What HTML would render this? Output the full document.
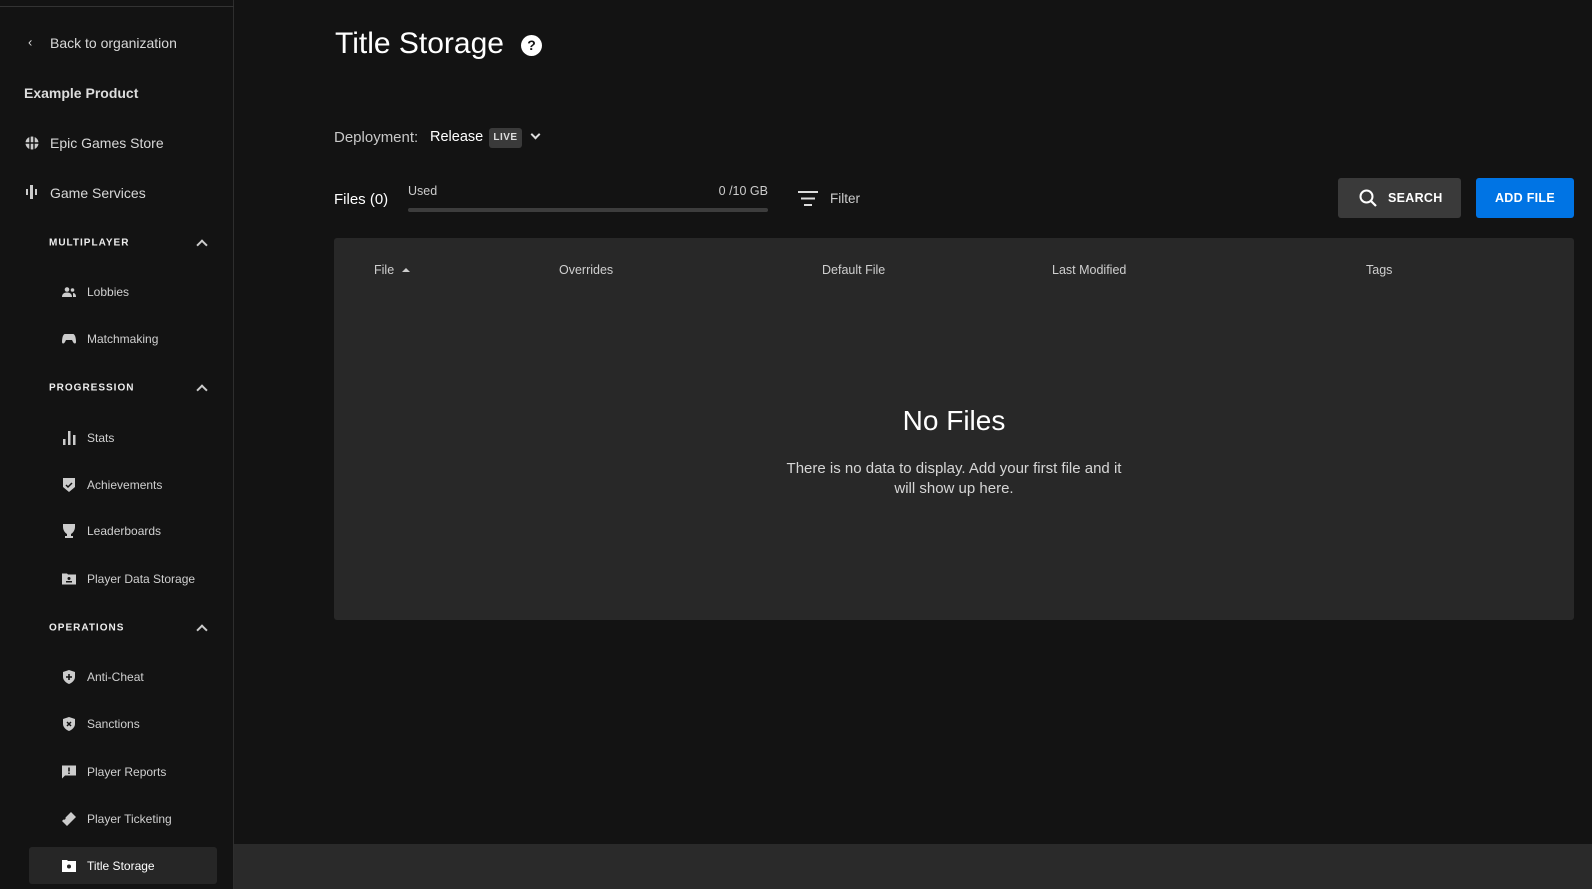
<!DOCTYPE html>
<html><head><meta charset="utf-8"><style>
*{margin:0;padding:0;box-sizing:border-box}
body{width:1592px;height:889px;background:#131313;font-family:"Liberation Sans",sans-serif;color:#ddd;position:relative;overflow:hidden}
.a{position:absolute;white-space:nowrap}
.side{position:absolute;left:0;top:0;width:234px;height:889px;background:#131313;border-right:1px solid #2e2e2e}
.nav{font-size:14px;color:#d8d8d8;transform:translateY(-50%)}
.sub{font-size:12px;color:#d0d0d0;transform:translateY(-50%)}
.sec{font-size:10px;font-weight:bold;letter-spacing:1px;color:#eee;transform:translateY(-50%)}
.ic{position:absolute;transform:translateY(-50%)}
.chev{position:absolute;width:8px;height:8px;border-left:2px solid #ccc;border-top:2px solid #ccc;transform:rotate(45deg)}
.hd{font-size:12.5px;color:#cfcfcf;transform:translateY(-50%)}
</style></head><body>
<div class="side"></div>
<div class="a" style="left:0;top:6px;width:234px;height:1px;background:#333"></div>
<div class="a" style="left:29px;top:847px;width:188px;height:37px;background:#262626;border-radius:3px"></div>

<div class="a nav" style="left:28px;top:42px;font-size:13px">‹</div>
<div class="a nav" style="left:50px;top:43px">Back to organization</div>
<div class="a nav" style="left:24px;top:93px;font-weight:bold;color:#ddd">Example Product</div>
<svg class="ic" style="left:25px;top:143px" width="14" height="14" viewBox="0 0 14 14"><circle cx="7" cy="7" r="6.5" fill="#ccc"/><path d="M0 7h14M5 0v14M9 0v14" stroke="#131313" stroke-width="1.4"/></svg>
<div class="a nav" style="left:50px;top:143px">Epic Games Store</div>
<svg class="ic" style="left:26px;top:192px" width="12" height="14" viewBox="0 0 12 14"><rect x="0" y="4" width="2" height="6" fill="#ccc"/><rect x="4" y="0" width="3" height="14" fill="#ccc"/><rect x="9" y="4" width="2" height="6" fill="#ccc"/></svg>
<div class="a nav" style="left:50px;top:193px">Game Services</div>

<div class="a sec" style="left:49px;top:243px">MULTIPLAYER</div>
<div class="chev" style="left:198px;top:241px"></div>
<svg class="ic" style="left:62px;top:292px" width="14" height="10" viewBox="0 0 14 10"><circle cx="5" cy="2.5" r="2.3" fill="#ccc"/><circle cx="10.5" cy="3" r="1.8" fill="#ccc"/><path d="M0 10c0-3 2-4.5 5-4.5s5 1.5 5 4.5z M11 6c2 0 3 1.5 3 4h-3z" fill="#ccc"/></svg>
<div class="a sub" style="left:87px;top:292px">Lobbies</div>
<svg class="ic" style="left:62px;top:339px" width="14" height="10" viewBox="0 0 14 10"><path d="M3 0h8c2 0 3 4 3 8 0 2-2 2-3 0l-1-2H4L3 8c-1 2-3 2-3 0 0-4 1-8 3-8z" fill="#ccc"/></svg>
<div class="a sub" style="left:87px;top:339px">Matchmaking</div>

<div class="a sec" style="left:49px;top:388px">PROGRESSION</div>
<div class="chev" style="left:198px;top:386px"></div>
<svg class="ic" style="left:63px;top:438px" width="13" height="14" viewBox="0 0 13 14"><rect x="0" y="8" width="2.5" height="6" fill="#ccc"/><rect x="5" y="0" width="2.5" height="14" fill="#ccc"/><rect x="10" y="4" width="2.5" height="10" fill="#ccc"/></svg>
<div class="a sub" style="left:87px;top:438px">Stats</div>
<svg class="ic" style="left:63px;top:485px" width="12" height="14" viewBox="0 0 12 14"><path d="M0 0h12v9l-6 5-6-5z" fill="#ccc"/><path d="M3 7l2 2 4-4" stroke="#131313" stroke-width="1.5" fill="none"/></svg>
<div class="a sub" style="left:87px;top:485px">Achievements</div>
<svg class="ic" style="left:63px;top:531px" width="12" height="14" viewBox="0 0 12 14"><path d="M0 0h12v3c0 3-2 6-4 7v2h2v2H2v-2h2v-2C2 9 0 6 0 3z" fill="#ccc"/></svg>
<div class="a sub" style="left:87px;top:531px">Leaderboards</div>
<svg class="ic" style="left:62px;top:579px" width="14" height="11" viewBox="0 0 14 11"><path d="M0 0h5l1 1h8v10H0z" fill="#ccc"/><circle cx="7" cy="5" r="1.5" fill="#131313"/><rect x="4" y="7.5" width="6" height="1.5" fill="#131313"/></svg>
<div class="a sub" style="left:87px;top:579px">Player Data Storage</div>

<div class="a sec" style="left:49px;top:628px">OPERATIONS</div>
<div class="chev" style="left:198px;top:626px"></div>
<svg class="ic" style="left:63px;top:677px" width="12" height="14" viewBox="0 0 12 14"><path d="M6 0l6 2v5c0 3-3 6-6 7-3-1-6-4-6-7V2z" fill="#ccc"/><path d="M6 4v6M3 7h6" stroke="#131313" stroke-width="1.6"/></svg>
<div class="a sub" style="left:87px;top:677px">Anti-Cheat</div>
<svg class="ic" style="left:63px;top:724px" width="12" height="14" viewBox="0 0 12 14"><path d="M6 0l6 2v5c0 3-3 6-6 7-3-1-6-4-6-7V2z" fill="#ccc"/><path d="M4 5l4 4M8 5l-4 4" stroke="#131313" stroke-width="1.5"/></svg>
<div class="a sub" style="left:87px;top:724px">Sanctions</div>
<svg class="ic" style="left:62px;top:772px" width="14" height="13" viewBox="0 0 14 13"><path d="M0 0h14v10H3l-3 3z" fill="#ccc"/><rect x="6.2" y="2" width="1.6" height="4" fill="#131313"/><rect x="6.2" y="7" width="1.6" height="1.5" fill="#131313"/></svg>
<div class="a sub" style="left:87px;top:772px">Player Reports</div>
<svg class="ic" style="left:62px;top:819px" width="14" height="14" viewBox="0 0 14 14"><path d="M9 0l5 5-9 9-5-5 1.5-1.5a1.5 1.5 0 0 0 2-2z" fill="#ccc"/></svg>
<div class="a sub" style="left:87px;top:819px">Player Ticketing</div>
<svg class="ic" style="left:62px;top:866px" width="14" height="12" viewBox="0 0 14 12"><path d="M0 0h5l1 1h8v11H0z" fill="#fff"/><circle cx="7" cy="6.5" r="2" fill="#262626"/></svg>
<div class="a sub" style="left:87px;top:866px;color:#fff">Title Storage</div>

<div class="a" style="left:234px;top:844px;width:1358px;height:45px;background:#2a2a2a"></div>

<div class="a" style="left:335px;top:27px;font-size:30px;color:#fff">Title Storage</div>
<div class="a" style="left:521px;top:35px;width:21px;height:21px;border-radius:50%;background:#fff;color:#131313;font-size:14px;font-weight:bold;text-align:center;line-height:21px">?</div>

<div class="a" style="left:334px;top:129px;font-size:15px;color:#c8c8c8">Deployment:</div>
<div class="a" style="left:430px;top:129px;font-size:14.5px;color:#fff">Release</div>
<div class="a" style="left:489px;top:128px;width:33px;height:20px;background:#3a3a3a;border-radius:3px;font-size:10px;font-weight:bold;color:#ddd;text-align:center;line-height:20px;letter-spacing:.5px">LIVE</div>
<div class="a" style="left:532px;top:131px;width:7px;height:7px;border-right:2px solid #ddd;border-bottom:2px solid #ddd;transform:rotate(45deg)"></div>

<div class="a" style="left:334px;top:191px;font-size:15px;color:#fff">Files (0)</div>
<div class="a" style="left:408px;top:184px;font-size:12.5px;color:#ccc">Used</div>
<div class="a" style="left:700px;top:184px;width:68px;text-align:right;font-size:12.5px;color:#ccc">0 /10 GB</div>
<div class="a" style="left:408px;top:208px;width:360px;height:4px;background:#3d3d3d;border-radius:2px"></div>
<svg class="a" style="left:798px;top:191px" width="20" height="15" viewBox="0 0 20 15"><path d="M0 1h20M3 7.5h14M6 14h8" stroke="#ddd" stroke-width="2"/></svg>
<div class="a" style="left:830px;top:191px;font-size:13.5px;color:#ccc">Filter</div>

<div class="a" style="left:1338px;top:178px;width:123px;height:40px;background:#3a3a3a;border-radius:3px"></div>
<svg class="a" style="left:1359px;top:189px" width="18" height="18" viewBox="0 0 18 18"><circle cx="7.5" cy="7.5" r="6" stroke="#fff" stroke-width="2" fill="none"/><path d="M12 12l5 5" stroke="#fff" stroke-width="2.2"/></svg>
<div class="a" style="left:1388px;top:191px;font-size:12.5px;font-weight:bold;color:#fff;letter-spacing:.3px">SEARCH</div>
<div class="a" style="left:1476px;top:178px;width:98px;height:40px;background:#0074e4;border-radius:3px;font-size:12.5px;font-weight:bold;color:#fff;text-align:center;line-height:41px;letter-spacing:.3px">ADD FILE</div>

<div class="a" style="left:334px;top:238px;width:1240px;height:382px;background:#282828;border-radius:3px"></div>
<div class="a hd" style="left:374px;top:270px">File</div>
<div class="a" style="left:402px;top:268px;width:0;height:0;border-left:4px solid transparent;border-right:4px solid transparent;border-bottom:4px solid #ccc"></div>
<div class="a hd" style="left:559px;top:270px">Overrides</div>
<div class="a hd" style="left:822px;top:270px">Default File</div>
<div class="a hd" style="left:1052px;top:270px">Last Modified</div>
<div class="a hd" style="left:1366px;top:270px">Tags</div>
<div class="a" style="left:854px;top:405px;width:200px;text-align:center;font-size:28px;color:#fff">No Files</div>
<div class="a" style="left:734px;top:459px;width:440px;text-align:center;font-size:15px;line-height:20px;color:#d6d6d6;white-space:normal">There is no data to display. Add your first file and it<br>will show up here.</div>
</body></html>
